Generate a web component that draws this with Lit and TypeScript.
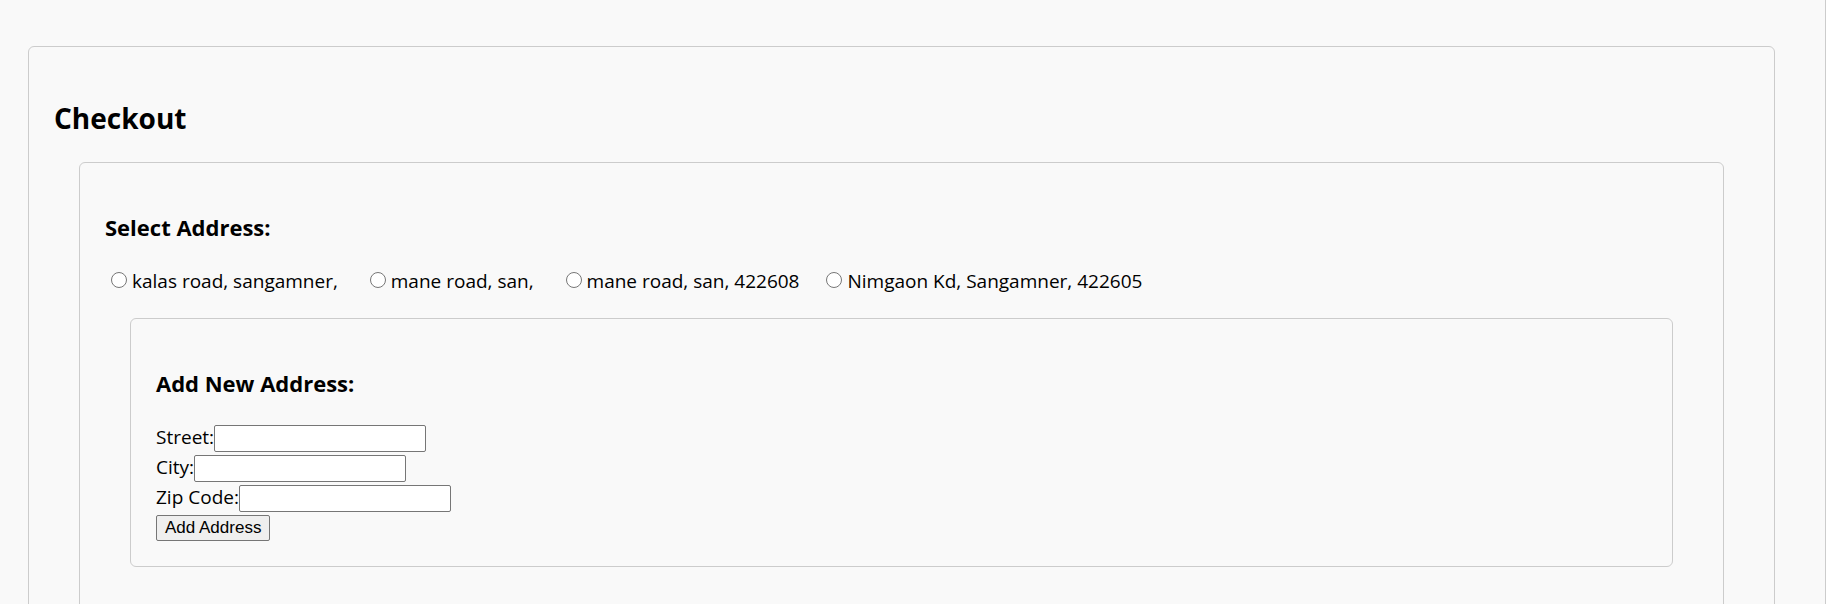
import { LitElement, html, css } from "lit";
import { customElement, state } from "lit/decorators.js";

interface Address {
  street: string;
  city: string;
  zip: string;
}

@customElement("app-root")
export class AppRoot extends LitElement {
  @state() private addresses: Address[] = [
    { street: "kalas road", city: "sangamner", zip: "" },
    { street: "mane road", city: "san", zip: "" },
    { street: "mane road", city: "san", zip: "422608" },
    { street: "Nimgaon Kd", city: "Sangamner", zip: "422605" },
  ];

  static styles = css`
    :host {
      display: block;
      box-sizing: border-box;
      height: 100vh;
      overflow: hidden;
      margin-right: 2px;
      border-right: 1px solid #ccc;
      padding: 46px 50px 0 28px;
      background: #f9f9f9;
      color: #000;
      font-family: "Open Sans", "Noto Sans", sans-serif;
      font-size: 19px;
      line-height: 25px;
    }
    .panel {
      border: 1px solid #ccc;
      border-radius: 6px;
      padding: 25px;
    }
    .panel .panel {
      margin: 0 25px;
    }
    .page {
      min-height: 100vh;
    }
    .addresses {
      min-height: 100vh;
    }
    h2,
    h3 {
      margin: 0;
      font-weight: 700;
    }
    h2 {
      padding: 26px 0 24px;
      font-size: 28px;
      line-height: 40px;
    }
    h3 {
      padding: 24px 0 26px;
      font-size: 22px;
      line-height: 31px;
    }
    .choices {
      display: flex;
      flex-wrap: wrap;
      padding-bottom: 24px;
    }
    .choice {
      display: flex;
      align-items: center;
      white-space: pre;
      margin-right: 21px;
    }
    .radio {
      width: 16px;
      height: 16px;
      margin: 0 5px 4px 6px;
    }
    .form {
      display: flex;
      flex-direction: column;
      align-items: flex-start;
      gap: 3px;
    }
    .field {
      display: flex;
      align-items: flex-start;
    }
    .input {
      box-sizing: border-box;
      width: 212px;
      height: 27px;
      margin: 0;
      border: 1px solid #767676;
      border-radius: 2px;
      padding: 1px 3px;
      background: #fff;
      font: 17px "Liberation Sans", sans-serif;
    }
    .add {
      box-sizing: border-box;
      height: 26px;
      border: 1px solid #767676;
      border-radius: 2px;
      padding: 0 8px;
      background: #efefef;
      color: #000;
      font: 17px "Liberation Sans", sans-serif;
    }
  `;

  private addAddress(event: Event) {
    event.preventDefault();
    const form = event.target as HTMLFormElement;
    const data = new FormData(form);
    this.addresses = [
      ...this.addresses,
      {
        street: String(data.get("street")),
        city: String(data.get("city")),
        zip: String(data.get("zip")),
      },
    ];
    form.reset();
  }

  private field(name: string, label: string) {
    return html`<div class="field">
      <label for=${name}>${label}</label
      ><input class="input" type="text" id=${name} name=${name} />
    </div>`;
  }

  render() {
    return html`
      <main class="panel page">
        <h2>Checkout</h2>
        <section class="panel addresses">
          <h3>Select Address:</h3>
          <div class="choices">
            ${this.addresses.map(
              (a, i) => html`<label class="choice" for="address-${i}"
                ><input class="radio" type="radio" name="address" id="address-${i}" /><span
                  >${`${a.street}, ${a.city}, ${a.zip}`}</span
                ></label
              >`
            )}
          </div>
          <section class="panel">
            <h3>Add New Address:</h3>
            <form class="form" @submit=${this.addAddress}>
              ${this.field("street", "Street:")} ${this.field("city", "City:")}
              ${this.field("zip", "Zip Code:")}
              <button class="add" type="submit">Add Address</button>
            </form>
          </section>
        </section>
      </main>
    `;
  }
}
